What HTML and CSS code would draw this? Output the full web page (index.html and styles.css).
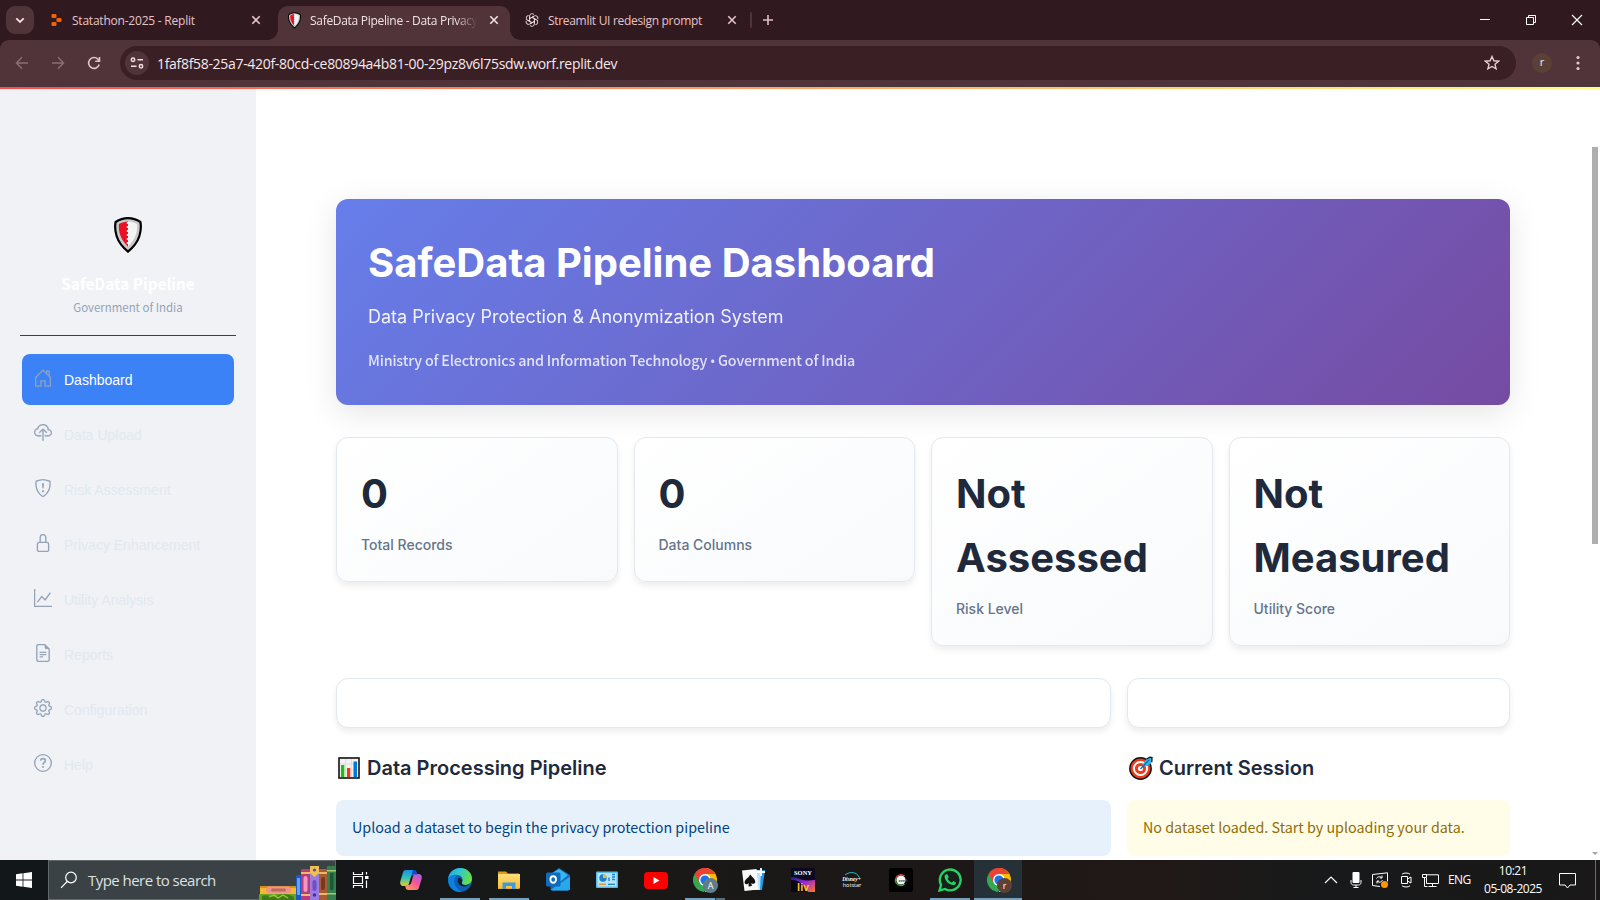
FILE: index.html
```html
<!DOCTYPE html>
<html lang="en">
<head>
<meta charset="utf-8">
<title>SafeData Pipeline - Data Privacy</title>
<link rel="stylesheet" href="styles.css">
</head>
<body>
<svg width="0" height="0" class="defs">
  <defs>
    <linearGradient id="copilotA" x1="0" y1="0" x2="0" y2="1"><stop offset="0" stop-color="#1b8fe8"/><stop offset=".5" stop-color="#2fc5b5"/><stop offset="1" stop-color="#f2c829"/></linearGradient>
    <linearGradient id="copilotB" x1="1" y1="0" x2=".2" y2="1"><stop offset="0" stop-color="#a15cf0"/><stop offset=".5" stop-color="#f0559a"/><stop offset="1" stop-color="#ff9a5c"/></linearGradient>
    <linearGradient id="edgeA" x1="0" y1="0" x2="1" y2=".3"><stop offset="0" stop-color="#1fa6e0"/><stop offset=".5" stop-color="#2fc9cf"/><stop offset="1" stop-color="#63e04c"/></linearGradient>
    <linearGradient id="sony" x1="0" y1="0" x2="1" y2="1"><stop offset="0" stop-color="#1a1a90"/><stop offset=".5" stop-color="#a02bd0"/><stop offset="1" stop-color="#ff7a1c"/></linearGradient>
    <linearGradient id="folder" x1="0" y1="0" x2="0" y2="1"><stop offset="0" stop-color="#ffdc7a"/><stop offset="1" stop-color="#fbc02d"/></linearGradient>
    <symbol id="shield" viewBox="0 0 28 36"><path d="M14 1.200C10 1.200 5 2.800 1.600 5c-.6 3-.5 9 1 14C4.600 25.500 9 30.500 14 34.600c5-4.100 9.400-9.100 11.400-15.600 1.500-5 1.600-11 1-14C23 2.800 18 1.200 14 1.200z" fill="#c9c9c9" stroke="#000" stroke-width="2.200"/><path d="M14 4.500c-3 0-6.500 1-9 2.600-.4 3 0 7.400 1.200 11C7.600 22.500 10.700 26.500 14 29.700z" fill="#e81224"/><path d="M14 4.500c3 0 6.500 1 9 2.600.4 3 0 7.400-1.200 11-1.400 4.400-4.500 8.400-7.800 11.600z" fill="#f4f4f4"/><path d="M14 5v23" stroke="#fff" stroke-width="2.400" stroke-dasharray="2 2"/></symbol>
    <symbol id="close" viewBox="0 0 10 10"><path d="M1.300 1.300l7.400 7.400m0-7.400L1.300 8.700" fill="none" stroke="currentColor" stroke-width="1.600"/></symbol>
    <symbol id="chrome" viewBox="0 0 24 24"><path d="M12 12L1.600 6A12 12 0 0 1 22.400 6z" fill="#ea4335"/><path d="M12 12V0a12 12 0 0 1 0 24z" fill="#fbbc04"/><path d="M12 12L1.600 6A12 12 0 0 0 11 24L17.200 15z" fill="#34a853"/><path d="M1.600 6A12 12 0 0 1 22.400 6H12L6.800 15z" fill="#ea4335"/><circle cx="12" cy="12" r="6" fill="#fff"/><circle cx="12" cy="12" r="4.600" fill="#1a73e8"/></symbol>
  </defs>
</svg>
<div class="screen">
  <header class="tabstrip">
    <button class="tab-search"><svg width="10" height="7" viewBox="0 0 10 7"><path d="M1.300 1.300L5 5l3.700-3.700" fill="none" stroke="#f3dfe2" stroke-width="1.800"/></svg></button>
    <div class="tab first">
      <svg width="14" height="14" viewBox="0 0 14 14"><g fill="#f26207"><rect x="1.500" y="1" width="5" height="4" rx="1"/><rect x="6.500" y="5" width="5" height="4" rx="1"/><rect x="1.500" y="9" width="5" height="4" rx="1"/></g></svg>
      <span class="tab-title">Statathon-2025 - Replit</span>
      <svg class="tab-x" width="10" height="10"><use href="#close"/></svg>
    </div>
    <div class="tab active">
      <svg width="13" height="17" class="fav"><use href="#shield"/></svg>
      <span class="tab-title fade">SafeData Pipeline - Data Privacy</span>
      <svg class="tab-x" width="10" height="10"><use href="#close"/></svg>
    </div>
    <div class="tab third">
      <svg width="14" height="14" viewBox="0 0 14 14" class="fav"><g fill="none" stroke="#ebdcdd" stroke-width=".9"><path d="M4.600 8.300V3.200a2.500 2.500 0 0 1 4.600-1.400M4.600 5.600L9 3.100"/><path d="M4.600 8.300V3.200a2.500 2.500 0 0 1 4.600-1.400M4.600 5.600L9 3.100" transform="rotate(60 7 7)"/><path d="M4.600 8.300V3.200a2.500 2.500 0 0 1 4.600-1.400M4.600 5.600L9 3.100" transform="rotate(120 7 7)"/><path d="M4.600 8.300V3.200a2.500 2.500 0 0 1 4.600-1.400M4.600 5.600L9 3.100" transform="rotate(180 7 7)"/><path d="M4.600 8.300V3.200a2.500 2.500 0 0 1 4.600-1.400M4.600 5.600L9 3.100" transform="rotate(240 7 7)"/><path d="M4.600 8.300V3.200a2.500 2.500 0 0 1 4.600-1.400M4.600 5.600L9 3.100" transform="rotate(300 7 7)"/></g></svg>
      <span class="tab-title">Streamlit UI redesign prompt</span>
      <svg class="tab-x" width="10" height="10"><use href="#close"/></svg>
    </div>
    <span class="tab-divider"></span>
    <svg class="new-tab" width="12" height="12" viewBox="0 0 12 12"><path d="M6 1v10M1 6h10" stroke="#e3bcc4" stroke-width="1.600"/></svg>
    <div class="win-controls">
      <svg width="12" height="12" viewBox="0 0 12 12"><path d="M1 5.500h10" stroke="#fff"/></svg>
      <svg width="12" height="12" viewBox="0 0 12 12"><path d="M1.500 3.500h7v7h-7zM3.500 3.500v-2h7v7h-2" fill="none" stroke="#fff"/></svg>
      <svg width="12" height="12" viewBox="0 0 12 12"><path d="M1 1l10 10M11 1L1 11" stroke="#fff" stroke-width="1.100"/></svg>
    </div>
  </header>

  <div class="toolbar">
    <svg class="nav-ic dim" width="14" height="14" viewBox="0 0 14 14"><path d="M7 1.300L1.500 7 7 12.700M1.500 7H13" fill="none" stroke="currentColor" stroke-width="1.500"/></svg>
    <svg class="nav-ic dim" width="14" height="14" viewBox="0 0 14 14"><path d="M7 1.300L12.500 7 7 12.700M12.500 7H1" fill="none" stroke="currentColor" stroke-width="1.500"/></svg>
    <svg class="nav-ic" width="14" height="14" viewBox="0 0 14 14"><path d="M12.200 8.500A5.400 5.400 0 1 1 11 3.300L12.400 5M12.500 1v4.300H8.200" fill="none" stroke="currentColor" stroke-width="1.600"/></svg>
    <div class="omnibox">
      <span class="site-info"><svg width="14" height="12" viewBox="0 0 14 12"><g fill="none" stroke="#f0dcdf" stroke-width="1.500"><circle cx="3" cy="2.700" r="1.700"/><path d="M7.500 2.700H13M1 9.300h5.500"/><circle cx="11" cy="9.300" r="1.700"/></g></svg></span>
      <span class="url">1faf8f58-25a7-420f-80cd-ce80894a4b81-00-29pz8v6l75sdw.worf.replit.dev</span>
      <svg class="star" width="16" height="16" viewBox="0 0 16 16"><path d="M8 1.500l1.900 4.300 4.700.4-3.600 3.100 1.100 4.600L8 11.500l-4.100 2.400L5 9.300 1.400 6.200l4.700-.4z" fill="none" stroke="#e6cdd1" stroke-width="1.400"/></svg>
    </div>
    <span class="avatar">r</span>
    <svg class="kebab" width="4" height="16" viewBox="0 0 4 16"><g fill="#e9c5cc"><circle cx="2" cy="2.500" r="1.600"/><circle cx="2" cy="8" r="1.600"/><circle cx="2" cy="13.500" r="1.600"/></g></svg>
  </div>
  <div class="deco"></div>

  <div class="app">
    <aside class="sidebar">
      <svg class="logo" width="28" height="36"><use href="#shield"/></svg>
      <div class="brand">SafeData Pipeline</div>
      <div class="org">Government of India</div>
      <nav class="menu">
        <a class="item on"><svg viewBox="0 0 16 16"><path d="M1.500 7.300V15.200h4.700v-4.700h3.600v4.700h4.700V7.300L8 .9zM11.300 3.500V1.900h2.200v4" fill="none" stroke="currentColor" stroke-width="1.100"/></svg>Dashboard</a>
        <a class="item"><svg viewBox="0 0 16 16" fill="currentColor"><path d="M4.406 1.342A5.530 5.530 0 0 1 8 0c2.690 0 4.923 2 5.166 4.579C14.758 4.804 16 6.137 16 7.773 16 9.569 14.502 11 12.687 11H10a.5.5 0 0 1 0-1h2.688C13.979 10 15 8.988 15 7.773c0-1.216-1.020-2.228-2.313-2.228h-.5v-.5C12.188 2.825 10.328 1 8 1a4.530 4.530 0 0 0-2.941 1.100c-.757.652-1.153 1.438-1.153 2.055v.448l-.445.049C2.064 4.805 1 5.952 1 7.318 1 8.785 2.230 10 3.781 10H6a.5.5 0 0 1 0 1H3.781C1.708 11 0 9.366 0 7.318c0-1.763 1.266-3.223 2.942-3.593.143-.863.698-1.723 1.464-2.383z" stroke="currentColor" stroke-width=".25"/><path d="M7.646 4.146a.5.5 0 0 1 .708 0l3 3a.5.5 0 0 1-.708.708L8.500 5.707V14.500a.5.5 0 0 1-1 0V5.707L5.354 7.854a.5.5 0 1 1-.708-.708l3-3z" stroke="currentColor" stroke-width=".25"/></svg>Data Upload</a>
        <a class="item"><svg viewBox="0 0 16 16"><path d="M8 .6C6.500.6 3.500 1.400 1.900 2c-.8 5.600 1.200 9 3.100 11.200 1.200 1.300 2.500 2.300 3 2.300s1.800-1 3-2.300c1.900-2.200 3.900-5.600 3.100-11.200C12.500 1.400 9.500.6 8 .6z" fill="none" stroke="currentColor" stroke-width="1.200"/><path d="M7.100 4.500a.9.900 0 0 1 1.800 0l-.4 4h-1z" fill="currentColor"/><circle cx="8" cy="10.900" r="1" fill="currentColor"/></svg>Risk Assessment</a>
        <a class="item"><svg viewBox="0 0 16 16"><path d="M5.500 7.500V3a2.500 2.500 0 0 1 5 0v4.500M4.500 7.500h7a1.500 1.500 0 0 1 1.500 1.500v5a1.500 1.500 0 0 1-1.500 1.500h-7A1.500 1.500 0 0 1 3 14V9a1.500 1.500 0 0 1 1.500-1.500z" fill="none" stroke="currentColor" stroke-width="1.200"/></svg>Privacy Enhancement</a>
        <a class="item"><svg viewBox="0 0 16 16"><path d="M.5 0v15.500H16M3 11.600l3.900-4.900 3 3L14.600 3.300" fill="none" stroke="currentColor" stroke-width="1.200"/></svg>Utility Analysis</a>
        <a class="item"><svg viewBox="0 0 16 16"><path d="M9.500.5H4A1.500 1.500 0 0 0 2.500 2v12A1.500 1.500 0 0 0 4 15.500h8a1.500 1.500 0 0 0 1.500-1.500V4.500zM5 7.500h6M5 9.500h6M5 11.500h3" fill="none" stroke="currentColor" stroke-width="1.200"/><path d="M9.500.5v2.500A1.500 1.500 0 0 0 11 4.500h2.500z" fill="currentColor"/></svg>Reports</a>
        <a class="item"><svg viewBox="0 0 16 16" fill="currentColor" stroke="currentColor" stroke-width=".2"><path d="M8 4.754a3.246 3.246 0 1 0 0 6.492 3.246 3.246 0 0 0 0-6.492zM5.754 8a2.246 2.246 0 1 1 4.492 0 2.246 2.246 0 0 1-4.492 0z"/><path d="M9.796 1.343c-.527-1.790-3.065-1.790-3.592 0l-.094.319a.873.873 0 0 1-1.255.520l-.292-.160c-1.640-.892-3.433.902-2.540 2.541l.159.292a.873.873 0 0 1-.520 1.255l-.319.094c-1.790.527-1.790 3.065 0 3.592l.319.094a.873.873 0 0 1 .520 1.255l-.160.292c-.892 1.640.901 3.434 2.541 2.540l.292-.159a.873.873 0 0 1 1.255.520l.094.319c.527 1.790 3.065 1.790 3.592 0l.094-.319a.873.873 0 0 1 1.255-.520l.292.160c1.640.893 3.434-.902 2.540-2.541l-.159-.292a.873.873 0 0 1 .520-1.255l.319-.094c1.790-.527 1.790-3.065 0-3.592l-.319-.094a.873.873 0 0 1-.520-1.255l.160-.292c.893-1.640-.902-3.433-2.541-2.540l-.292.159a.873.873 0 0 1-1.255-.520l-.094-.319zm-2.633.283c.246-.835 1.428-.835 1.674 0l.094.319a1.873 1.873 0 0 0 2.693 1.115l.291-.160c.764-.415 1.600.420 1.184 1.185l-.159.292a1.873 1.873 0 0 0 1.116 2.692l.318.094c.835.246.835 1.428 0 1.674l-.319.094a1.873 1.873 0 0 0-1.115 2.693l.160.291c.415.764-.420 1.600-1.185 1.184l-.291-.159a1.873 1.873 0 0 0-2.693 1.116l-.094.318c-.246.835-1.428.835-1.674 0l-.094-.319a1.873 1.873 0 0 0-2.692-1.115l-.292.160c-.764.415-1.600-.420-1.184-1.185l.159-.291A1.873 1.873 0 0 0 1.945 8.930l-.319-.094c-.835-.246-.835-1.428 0-1.674l.319-.094A1.873 1.873 0 0 0 3.060 4.377l-.160-.292c-.415-.764.420-1.600 1.185-1.184l.292.159a1.873 1.873 0 0 0 2.692-1.115l.094-.319z"/></svg>Configuration</a>
        <a class="item"><svg viewBox="0 0 16 16"><circle cx="8" cy="8" r="7.400" fill="none" stroke="currentColor" stroke-width="1.200"/><path d="M5.900 5.900c.1-1.200.9-1.800 2.100-1.800s2.100.7 2.100 1.800c0 1.500-2.100 1.500-2.100 3.600" fill="none" stroke="currentColor" stroke-width="1.400"/><circle cx="8" cy="11.500" r=".9" fill="currentColor"/></svg>Help</a>
      </nav>
    </aside>

    <main class="main">
      <section class="banner">
        <h1>SafeData Pipeline Dashboard</h1>
        <p class="sub">Data Privacy Protection &amp; Anonymization System</p>
        <p class="ministry">Ministry of Electronics and Information Technology <span class="dot">•</span> Government of India</p>
      </section>
      <section class="metrics">
        <div class="metric"><div class="value">0</div><div class="label">Total Records</div></div>
        <div class="metric"><div class="value">0</div><div class="label">Data Columns</div></div>
        <div class="metric"><div class="value">Not Assessed</div><div class="label">Risk Level</div></div>
        <div class="metric"><div class="value">Not Measured</div><div class="label">Utility Score</div></div>
      </section>
      <section class="panels">
        <div class="panel">
          <div class="card"></div>
          <h3><svg width="22" height="22" viewBox="0 0 22 22"><rect x="1" y="1" width="20" height="20" fill="#f2f2f2" stroke="#111" stroke-width="1.600"/><path d="M7.500 2v18M13.500 2v18M2 7h18M2 13h18" stroke="#d5d5d5" stroke-width=".7"/><path d="M3 8h3.300v12H3z" fill="#16c60c"/><path d="M9 11h3.300v9H9z" fill="#f03a17"/><path d="M15.500 4.500h3.500V20h-3.500z" fill="#0078d7"/></svg>Data Processing Pipeline</h3>
          <div class="alert info">Upload a dataset to begin the privacy protection pipeline</div>
        </div>
        <div class="panel session">
          <div class="card"></div>
          <h3><svg width="24" height="24" viewBox="0 0 24 24"><circle cx="11.500" cy="12.500" r="10.700" fill="#f03a17" stroke="#111" stroke-width="1.400"/><circle cx="11.500" cy="12.500" r="6.600" fill="none" stroke="#fff" stroke-width="2"/><circle cx="11.500" cy="12.500" r="2.600" fill="#fff"/><path d="M13.500 8.500l4-5.500L21 1.200l2 .6-.3 5L18 10l-3 .5z" fill="#31b7ea"/><path d="M17.500 3L21 1.200l2 .4-.2 4.500" fill="none" stroke="#111" stroke-width="1.300"/><path d="M11.500 13L20 4" stroke="#0b6fb8" stroke-width="1.300"/></svg>Current Session</h3>
          <div class="alert warn">No dataset loaded. Start by uploading your data.</div>
        </div>
      </section>
    </main>
    <div class="scroll"><span class="thumb"></span><span class="arrow"></span></div>
  </div>

  <footer class="taskbar">
    <div class="start"><svg width="16" height="16" viewBox="0 0 16 16" fill="#fff"><path d="M0 2.200L6.600 1.300v6.300H0zM7.400 1.200L16 0v7.600H7.400zM0 8.400h6.600v6.300L0 13.800zM7.400 8.400H16V16l-8.600-1.200z"/></svg></div>
    <div class="search">
      <svg width="18" height="18" viewBox="0 0 18 18"><circle cx="11" cy="6.500" r="5.300" fill="none" stroke="#fff" stroke-width="1.200"/><path d="M7.200 10.500L1 16.800" stroke="#fff" stroke-width="1.200"/></svg>
      <span>Type here to search</span>
      <svg class="books" width="77" height="34" viewBox="0 0 77 34">
        <path d="M1 20h36v8H1z" fill="#f5b82e"/><path d="M1 20h36v2H1z" fill="#d98c1f"/><rect x="7" y="20.500" width="25" height="7" rx="3.500" fill="#f0918a"/><rect x="12" y="22.500" width="15" height="3" rx="1.500" fill="#b96d5d"/>
        <path d="M0 28h37v6H0z" fill="#69a51d"/><path d="M3 30c6-3 10 3 15 0s12-2 17 1v3H3z" fill="#3f7a1f"/><path d="M10 31l5-2 4 3 5-3 5 3" fill="none" stroke="#9fce35" stroke-width="1.200"/>
        <rect x="37" y="9" width="5" height="25" rx="1" fill="#1d58c8"/><path d="M38 12h3v17h-3z" fill="#66a0f0"/>
        <rect x="42" y="3" width="9" height="31" rx="1" fill="#b83c7c"/><path d="M42 6h9v2h-9zM42 28h9v2h-9z" fill="#e8bd6a"/><rect x="44.500" y="10" width="4" height="16" rx="2" fill="#ef96c2"/>
        <rect x="51" y="0" width="9" height="34" fill="#9b7be0"/><path d="M51 0h9v7l-4.500 4-4.500-4z" fill="#f0c050"/><circle cx="55.500" cy="4" r="1.600" fill="#6542b4"/><rect x="53.500" y="14" width="4" height="11" rx="2" fill="#6f50b8"/><circle cx="55.500" cy="29" r="1.800" fill="#4d2d9c"/>
        <rect x="60" y="3" width="8" height="31" rx="1" fill="#a85c30"/><path d="M60 6h8v2h-8zM60 27h8v2h-8z" fill="#e8b66c"/><rect x="62" y="11" width="4" height="13" rx="2" fill="#743a20"/>
        <rect x="68" y="0" width="9" height="34" rx="1" fill="#35804c"/><path d="M68 4h9v1.500h-9zM68 27h9v1.500h-9z" fill="#a8c876"/><rect x="71" y="7" width="3.500" height="17" rx="1" fill="#1c5a35"/>
      </svg>
    </div>
    <div class="apps">
      <div class="slot task-view"><svg width="18" height="18" viewBox="0 0 18 18"><path d="M1.500 5.500h9v7h-9zM1.500 1v2.500h9V1M1.500 17v-2.500h9V17M14.500 1v2.500M14.500 9.500V17" fill="none" stroke="#fff" stroke-width="1.200"/><rect x="13" y="5" width="3.500" height="3" fill="#fff"/></svg></div>
      <div class="slot"><svg width="24" height="24" viewBox="0 0 24 24"><path d="M7 2h7.500c2 0 2.500 1 3 2.800L18 7h-3.500c-1.500 0-2.300.8-2.800 2.400L10 15.500C9.300 17.600 8.500 18 6.500 18H4.300C1.600 18 .7 15.500 1.400 13L4 4.500C4.600 2.700 5.300 2 7 2z" fill="url(#copilotA)"/><path d="M17 22H9.500c-2 0-2.500-1-3-2.800L6 17h3.500c1.500 0 2.300-.8 2.800-2.400L14 8.500C14.700 6.400 15.500 6 17.500 6h2.200c2.700 0 3.600 2.500 2.900 5L20 19.500c-.6 1.800-1.300 2.500-3 2.500z" fill="url(#copilotB)"/><path d="M14 2c2 0 3 .5 3.500 2.500L18 6.500h-3c-1.500 0-2.600.5-3.200 2.500z" fill="#1548c4"/></svg></div>
      <div class="slot open"><svg width="24" height="24" viewBox="0 0 24 24"><circle cx="12" cy="12" r="12" fill="#0f5fb5"/><path d="M0 11.500C.5 5 5.500 0 12 0c7 0 12 5 12 10.500 0 4-3 6.500-6.500 6.500-3 0-4.200-1.500-3.500-2.500 1.500-2 1-6.500-4-7.500C5 6 1 8.500 0 11.500z" fill="url(#edgeA)"/><path d="M0 11.500C1 8.500 5 6.200 9.500 7.500 6 9 5.500 14 7.500 18c1.500 3 4 5 6.500 5.800C6 25 0 19 0 11.500z" fill="#0b82df"/><path d="M11 9.500c2 .3 3.600 2.500 3 5-.8 1.300.5 2.500 3.500 2.500 2 0 3.500-.6 4.800-1.700-2.300 3-6 3.600-8.800 2.700-3.500-1.500-5-5.500-2.500-8.500z" fill="#16222b"/></svg></div>
      <div class="slot open"><svg width="24" height="24" viewBox="0 0 24 24"><path d="M1 3.500h8l2 2h11V21H1z" fill="#e09a14"/><path d="M1 6h22v14.500H1z" fill="url(#folder)"/><path d="M5.500 21v-6.500h13V21h-3.500v-3H9v3z" fill="#3c9be8"/></svg></div>
      <div class="slot"><svg width="24" height="24" viewBox="0 0 24 24"><path d="M13 0l11 7v13a2.500 2.500 0 0 1-2.500 2.500H7A2.500 2.500 0 0 1 4.500 20V6z" fill="#1668b8"/><path d="M7 4.500L13 1l9 6-8 7-7-3z" fill="#35b8f1"/><path d="M4.500 22L24 8.500V20a2.500 2.500 0 0 1-2.500 2.500H7z" fill="#28a8ea"/><rect y="4.500" width="14.500" height="14" rx="1.500" fill="#0f6cbd"/><ellipse cx="7.200" cy="11.500" rx="2.800" ry="3.200" fill="none" stroke="#fff" stroke-width="1.900"/></svg></div>
      <div class="slot"><svg width="22" height="18" viewBox="0 0 22 18"><rect width="22" height="16.500" y=".5" rx="1" fill="#5bb9e9"/><rect x="1.500" y="2" width="19" height="13.500" fill="#b5e5fb"/><circle cx="7" cy="7" r="3.700" fill="#1b83cb"/><path d="M7 7V3.300A3.700 3.700 0 0 1 10.700 7z" fill="#ffb43c"/><path d="M13 10V6.500M16 3.500h3M16 6h3M16 8.500h3" stroke="#1b83cb" stroke-width="1.400"/><path d="M3 13.300h7" stroke="#ef8e2b" stroke-width="1.300"/><path d="M12 13.300h7" stroke="#1b83cb" stroke-width="1.300"/></svg></div>
      <div class="slot"><svg width="24" height="17" viewBox="0 0 24 17"><rect width="24" height="17" rx="4" fill="#f00"/><path d="M9.500 5l6 3.500-6 3.500z" fill="#fff"/></svg></div>
      <div class="slot open multi"><svg width="24" height="24"><use href="#chrome"/></svg><b class="badge a">A</b></div>
      <div class="slot"><svg width="24" height="24" viewBox="0 0 24 24"><path d="M12 3l11-1-3 20H9z" fill="#2699e6"/><path d="M8 2h11l-1 20H8z" fill="#b9e2fa"/><path d="M0 2.500L14.500 1l2 20.500-14 1.500z" fill="#fafafa"/><path d="M8.300 6.500c2 3 4.700 4.300 5 7 .2 2.200-2.500 3-4 1.400l.6 3.200-3.400.3.200-3.300c-1.200 1.900-3.900 1.500-4.100-.6C2.400 11.800 6.800 9.500 8.300 6.500z" fill="#111"/><path d="M19 0v8M15 4h8" stroke="#fff" stroke-width="1.800"/></svg></div>
      <div class="slot"><svg width="24" height="24" viewBox="0 0 24 24"><rect width="24" height="24" fill="#0b0820"/><path d="M0 9c6-1 9 5 24 3v12H17C14 17 7 11 0 12z" fill="url(#sony)"/><path d="M0 13c7 0 11 4 14 11H0z" fill="#0a0715"/><text x="12" y="7" class="t-sony" textLength="18" lengthAdjust="spacingAndGlyphs">SONY</text><text x="12" y="22.500" class="t-liv">liv</text></svg></div>
      <div class="slot"><svg width="24" height="24" viewBox="0 0 24 24"><path d="M5 7c5-4 12-3 14 2" fill="none" stroke="#25b8c5" stroke-width="1"/><text x="11.500" y="13" class="t-disney">Disney+</text><text x="12" y="18.500" class="t-hot">hotstar</text></svg></div>
      <div class="slot"><svg width="24" height="24" viewBox="0 0 24 24"><rect width="24" height="24" rx="2.500" fill="#000"/><circle cx="12" cy="12" r="4.600" fill="#f5f5f5"/><path d="M15.500 8A5.300 5.300 0 0 0 7 10" fill="none" stroke="#e94636" stroke-width="1.300"/><path d="M7 10a5.300 5.300 0 0 0 8.500 6" fill="none" stroke="#38a845" stroke-width="1.300"/><text x="14" y="13.500" class="t-zee">zee5</text></svg></div>
      <div class="slot open"><svg width="24" height="24" viewBox="0 0 24 24"><path d="M1.500 22.500l1.600-5.600A10.400 10.400 0 1 1 7 20.900z" fill="#17201a" stroke="#25d366" stroke-width="2.300"/><path d="M8.300 6.300c-1.300.3-1.900 1.500-1.700 2.700.5 4 4.600 7.700 8.700 8.100 1.300 0 2.600-.8 2.700-2.300 0-.5-2.300-1.700-2.800-1.600-.6.200-1 1.300-1.500 1.300-1.500-.4-3.600-2.400-4-3.600 0-.6.900-1.100.9-1.700 0-.5-.9-2.700-1.300-2.900z" fill="#25d366"/></svg></div>
      <div class="slot open current"><svg width="24" height="24"><use href="#chrome"/></svg><b class="badge r">r</b></div>
    </div>
    <div class="tray">
      <svg class="t1" width="14" height="8" viewBox="0 0 14 8"><path d="M1 7l6-6 6 6" fill="none" stroke="#fff" stroke-width="1.200"/></svg>
      <svg class="t2" width="12" height="16" viewBox="0 0 12 16"><rect x="2.500" width="7" height="11" rx="1" fill="#fff"/><path d="M1 8v2.500c0 1.500 1 2.500 2.500 2.500h5c1.500 0 2.500-1 2.500-2.500V8M6 13v2.500M3.500 15.500h5" fill="none" stroke="#fff"/></svg>
      <svg class="t3" width="17" height="16" viewBox="0 0 17 16"><path d="M8 14.500L.5 13.500v-11L15.500.8v8.700" fill="none" stroke="#fff"/><path d="M4.500 6.500c1-2 4-2.500 5.500-.5V3.500M10 6H7.800M10.500 8c-1 2.500-4 3-5.500 1V11.500M5 9h2" fill="none" stroke="#fff"/><circle cx="12.500" cy="12.500" r="3.500" fill="#ff9800"/></svg>
      <svg class="t4" width="12" height="16" viewBox="0 0 12 16"><path d="M2 2.200c2-1.600 6-1.600 8 0M2 13.800c2 1.600 6 1.600 8 0M1.500 4.500h6v7h-6zM7.500 7L11 5v6L7.500 9" fill="none" stroke="#fff"/></svg>
      <svg class="t5" width="17" height="15" viewBox="0 0 17 15"><path d="M4.500 3.500V1.800H16.500v8.700H4.500V5M10.500 10.500v3M6.500 13.500h8M.5 1.500h4v3h-4zM2.500 4.500v9h3" fill="none" stroke="#fff"/></svg>
      <span class="lang">ENG</span>
      <div class="clock"><span>10:21</span><span>05-08-2025</span></div>
      <svg class="t6" width="17" height="17" viewBox="0 0 17 17"><path d="M.5 1.500h16v11.500H11l-2.500 3L6 13H.5z" fill="none" stroke="#fff"/></svg>
      <i class="peek"></i>
    </div>
  </footer>
</div>
</body>
</html>
```
FILE: styles.css
```css
* { box-sizing: border-box; }
body { margin: 0; overflow: hidden; }
.defs { position: absolute; }
svg { display: block; flex: none; }
.screen { width: 1600px; height: 900px; display: flex; flex-direction: column; background: #fff; overflow: hidden; }

/* Browser tabs */
.tabstrip { height: 40px; flex: none; background: #311a1f; display: flex; align-items: center; padding-left: 6px; font-family: "Open Sans", sans-serif; }
.tab-search { width: 28px; height: 28px; border: 0; padding: 0; border-radius: 9px; background: #51343a; display: flex; align-items: center; justify-content: center; }
.tab { width: 240px; height: 34px; margin-top: 6px; padding: 0 15px 6px; display: flex; align-items: center; color: #e6c3ca; }
.tab.first { padding-left: 16px; padding-right: 13px; }
.tab-title { flex: 1; margin-left: 8px; padding-top: 1px; white-space: nowrap; overflow: hidden; font-size: 12px; letter-spacing: -0.22px; line-height: 18px; }
.tab.active { position: relative; width: 232px; margin-left: 4px; background: #51343a; border-radius: 10px 10px 0 0; color: #f3e2e4; padding: 0 11px 6px 10px; }
.tab.active .tab-title { margin-left: 9px; margin-right: 10px; letter-spacing: -0.3px; }
.tab.active::before, .tab.active::after { content: ""; position: absolute; bottom: 0; width: 10px; height: 10px; }
.tab.active::before { left: -10px; background: radial-gradient(circle at 0 0, transparent 9.500px, #51343a 10px); }
.tab.active::after { right: -10px; background: radial-gradient(circle at 100% 0, transparent 9.500px, #51343a 10px); }
.fade { -webkit-mask-image: linear-gradient(90deg, #000 86%, transparent 99%); mask-image: linear-gradient(90deg, #000 86%, transparent 99%); }
.tab.third { width: 240px; padding-left: 15px; padding-right: 13px; }
.tab.third .tab-title { letter-spacing: -0.31px; margin-left: 9px; }
.tab-divider { width: 2px; height: 16px; background: #51343a; border-radius: 1px; }
.new-tab { margin-left: 10px; }
.win-controls { margin-left: auto; display: flex; gap: 34px; padding-right: 17px; }

/* Address bar */
.toolbar { height: 47px; flex: none; background: #51343a; border-radius: 9px 9px 0 0; box-shadow: 0 -9px 0 0 #311a1f; display: flex; align-items: center; padding: 0 20px 1px 15px; color: #e6c0c8; font-family: "Open Sans", sans-serif; border-bottom: 1px solid #46383c; }
.tabstrip { position: relative; z-index: 1; }
.nav-ic { margin-right: 22px; }
.nav-ic.dim { color: #8a6d72; }
.omnibox { width: 1396px; height: 34px; margin-left: -3px; border-radius: 17px; background: #3a1f25; display: flex; align-items: center; padding: 0 16px 0 5px; }
.site-info { width: 24px; height: 24px; border-radius: 50%; background: #51343a; display: flex; align-items: center; justify-content: center; }
.url { flex: 1; margin-left: 8px; padding-top: 1px; font-size: 14px; letter-spacing: -0.315px; color: #f6e9ea; }
.avatar { margin-left: 16px; width: 20px; height: 20px; border-radius: 50%; background: #5a4036; color: #eee; font-size: 11px; line-height: 18px; text-align: center; }
.kebab { margin-left: 24px; }
.deco { height: 2px; flex: none; background: linear-gradient(90deg, #ff4b4b, #fffd80); }

/* Application */
.app { flex: 1; min-height: 0; display: flex; overflow: hidden; }
.sidebar { width: 256px; flex: none; background: #f0f2f6; padding: 128px 20px 0; display: flex; flex-direction: column; align-items: center; font-family: "Noto Sans CJK SC", sans-serif; }
.brand { margin-top: 17px; height: 26px; line-height: 26px; font-weight: 700; font-size: 15.350px; color: #fff; }
.org { margin-top: 1px; height: 20px; line-height: 20px; font-size: 11.450px; color: #94a3b8; }
.menu { align-self: stretch; margin-top: 18px; border-top: 1px solid #334155; padding: 18px 2px 0; display: flex; flex-direction: column; gap: 4px; }
.item { height: 51px; border-radius: 8px; padding: 1px 0 0 12px; display: flex; align-items: center; gap: 12px; font: 14px "Liberation Sans", Arial, sans-serif; color: #e2e8f0; }
.item svg { width: 18px; height: 18px; margin-top: -4px; color: #94a3b8; }
.item.on { background: #3b82f6; color: #fff; }

.main { flex: 1; min-width: 0; padding: 110px 82px 0 80px; font-family: Inter, sans-serif; }
.banner { height: 206px; border-radius: 12px; padding: 32px; background: linear-gradient(135deg, #667eea 0%, #764ba2 100%); box-shadow: 0 8px 32px rgba(0, 0, 0, .1); color: #fff; }
.banner h1 { margin: 0; font-size: 40px; font-weight: 700; line-height: 64px; }
.banner .sub { margin: 7px 0 0; font-size: 18px; line-height: 29px; opacity: .9; }
.banner .ministry { margin: 17px 0 0; font: 500 14.300px/24px "Noto Sans CJK SC", sans-serif; letter-spacing: -0.165px; opacity: .8; }
.dot { font-family: "Noto Sans", sans-serif; font-size: 13px; line-height: 1; }

.metrics { margin-top: 32px; display: grid; grid-template-columns: repeat(4, 1fr); gap: 16px; align-items: start; }
.metric { height: 145px; border: 1px solid #e2e8f0; border-radius: 12px; padding: 24px; background: linear-gradient(145deg, #fff 0%, #f8fafc 100%); box-shadow: 0 4px 6px rgba(0, 0, 0, .07); }
.metric:nth-child(n+3) { height: 209px; }
.value { font-size: 40px; font-weight: 700; line-height: 64px; color: #1e293b; }
.label { margin-top: 7px; font-size: 14px; font-weight: 500; line-height: 23px; color: #64748b; }

.panels { margin-top: 32px; display: grid; grid-template-columns: 775px 1fr; gap: 16px; }
.card { height: 50px; border: 1px solid #e2e8f0; border-radius: 12px; background: #fff; box-shadow: 0 4px 6px rgba(0, 0, 0, .07); }
.panel h3 { margin: 24px 0 16px; padding-left: 2px; height: 32px; display: flex; align-items: center; gap: 7px; font-size: 20px; font-weight: 600; color: #1e293b; }
.session h3 { gap: 6px; }
.alert { height: 56px; border-radius: 8px; padding: 0 16px; font: 14.320px/54px "Noto Sans CJK SC", sans-serif; }
.info { background: #e7f1fc; color: #004280; }
.warn { background: #fffce7; color: #926c05; }

.scroll { width: 8px; flex: none; display: flex; flex-direction: column; justify-content: space-between; margin: 58px 0 5px; padding-right: 2px; }
.thumb { height: 397px; background: #adadb2; }
.arrow { border: 3px solid transparent; border-top: 3px solid #a3a3a8; border-bottom: 0; }

/* Taskbar */
.taskbar { height: 40px; flex: none; display: flex; background: linear-gradient(90deg, #121719 0%, #171818 30%, #1e1817 65%, #211917 72%, #17191a 83%, #1a1818 100%); color: #fff; font-family: "Open Sans", sans-serif; }
.start { width: 48px; display: flex; align-items: center; justify-content: center; }
.search { position: relative; width: 288px; border: 1px solid #63696b; background: #3b4245; display: flex; align-items: center; padding-left: 11px; color: #dfe0e1; font-size: 15px; letter-spacing: -0.54px; }
.search span { margin-left: 10px; padding-bottom: 1px; }
.books { position: absolute; right: -1px; bottom: -1px; }
.apps { display: flex; margin-left: 1px; }
.slot { position: relative; width: 49px; height: 40px; display: flex; align-items: center; justify-content: center; }
.task-view { padding-right: 2px; }
.slot.open::after { content: ""; position: absolute; left: 5px; bottom: 0; width: 40px; height: 2px; background: #76a0bb; }
.slot.multi::after { left: 5px; background: linear-gradient(90deg, #76a0bb 30px, #2b3940 30px, #2b3940 31px, #546d7b 31px); }
.slot.current { background: linear-gradient(#263137, #263137) 0 0 / 48px 40px no-repeat; }
.slot.current::after { left: 0; width: 48px; }
.badge { position: absolute; left: 23px; top: 18px; width: 15px; height: 15px; border-radius: 50%; text-align: center; font: 9px/15px "Open Sans", sans-serif; }
.badge.a { background: #607d8b; }
.badge.r { background: #5d4037; }
.t-sony { font: bold 5.500px "Liberation Serif", serif; fill: #fff; text-anchor: middle; }
.t-liv { font: bold 10px "Open Sans", sans-serif; fill: #ffc21a; text-anchor: middle; }
.t-disney { font: italic bold 5.500px "Liberation Serif", serif; fill: #fff; text-anchor: middle; }
.t-hot { font: 5.500px "Open Sans", sans-serif; fill: #fff; text-anchor: middle; }
.t-zee { font: bold 4px "Open Sans", sans-serif; fill: #555; text-anchor: middle; }
.tray { margin-left: auto; display: flex; align-items: center; }
.t1 { margin-right: 1px; }
.t2 { margin-left: 11px; }
.t3 { margin-left: 10px; }
.t4 { margin-left: 11px; }
.t5 { margin-left: 10px; }
.lang { width: 23px; margin-left: 9px; padding-bottom: 1px; font-size: 12px; letter-spacing: -0.6px; }
.clock { width: 60px; margin-left: 12px; display: flex; flex-direction: column; text-align: center; font-size: 12px; line-height: 18px; letter-spacing: -0.46px; }
.t6 { margin-left: 16px; }
.peek { width: 1px; height: 40px; background: #6d6d6d; margin: 0 4px 0 19px; }
```
